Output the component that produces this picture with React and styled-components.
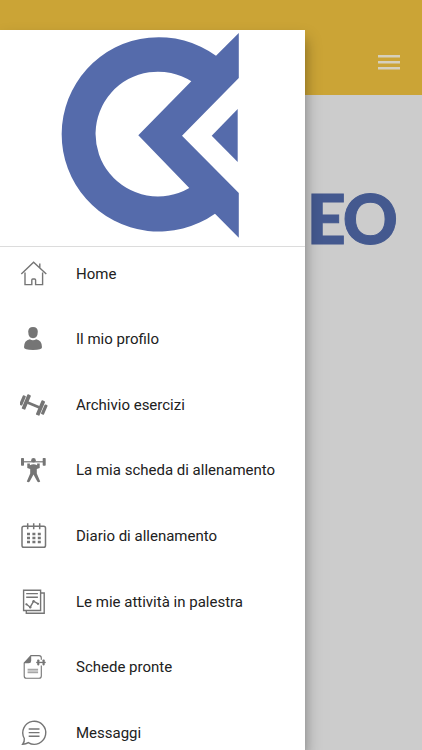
import styled, { createGlobalStyle } from "styled-components";

const GlobalStyle = createGlobalStyle`
  * {
    box-sizing: border-box;
  }
  body {
    margin: 0;
    overflow: hidden;
    font-family: Roboto, sans-serif;
  }
`;

const Screen = styled.div`
  position: relative;
  width: 100%;
  height: 100vh;
  overflow: hidden;
  background: #cccccc;
`;

const TopBar = styled.header`
  display: flex;
  justify-content: flex-end;
  height: 95px;
  padding: 55px 22px 0 0;
  background: #cba436;
`;

const MenuButton = styled.button`
  display: flex;
  flex-direction: column;
  gap: 4px;
  width: 22px;
  height: 15px;
  padding: 0;
  border: none;
  background: none;
`;

const MenuLine = styled.span`
  height: 2px;
  background: #d6d0bc;
  box-shadow: 0 0.5px 0.5px #d6d0bc;
`;

const Brand = styled.h1`
  margin: 0;
  padding: 81px 26px 0 0;
  font-family: Lato, sans-serif;
  font-size: 68px;
  font-weight: 900;
  line-height: 83px;
  letter-spacing: -2px;
  text-align: right;
  color: #44598f;
  -webkit-text-stroke: 1px #44598f;
`;

/* slides over the page, leaves the status bar visible */
const Drawer = styled.aside`
  position: absolute;
  top: 29.5px;
  bottom: 0;
  left: 0;
  width: 304.5px;
  background: white;
  box-shadow: 0 10px 10px -4px rgba(0, 0, 0, 0.26),
    2px 8px 14px 0 rgba(0, 0, 0, 0.26);
`;

const DrawerHeader = styled.div`
  height: 217.5px;
  border-bottom: 1.5px solid #dcdcdc;
`;

const Logo = styled.svg`
  display: block;
  width: 304px;
  height: 216px;
  fill: #556bab;
`;

const Menu = styled.nav`
  display: flex;
  flex-direction: column;
  gap: 13px;
  padding-top: 0.4px;
`;

const MenuItem = styled.a`
  display: flex;
  align-items: center;
  flex-shrink: 0;
  height: 52.6px;
  padding-left: 20px;
  column-gap: 28px;
  font-size: 15px;
  color: #212121;
  white-space: nowrap;
`;

const Icon = styled.svg`
  flex-shrink: 0;
  width: 28px;
  height: 28px;
  fill: none;
  stroke: #757575;
  stroke-width: 1.4;
`;

const Solid = styled.g`
  fill: #757575;
  stroke: none;
`;

const HomeIcon = () => (
  <Icon viewBox="0 0 28 28">
    <path d="M1.3 14 13.6 2.2 26.3 14M5 12.5V24.6h6.8V20q0-1 1-1h1.8q1 0 1 1v4.6h7V12.5M19.8 7.5V3.6" />
  </Icon>
);

const ProfileIcon = () => (
  <Icon viewBox="0 0 28 28">
    <Solid>
      <path d="M8.2 6.8Q8.2 2 13 2t4.8 4.8Q17.6 13.2 13 13.2T8.2 6.8Z" />
      <path d="M4 22.3q0-6.8 5.8-8 3.2 2 6.4 0 5.8 1.2 5.8 8 0 2.7-9 2.7t-9-2.7Z" />
    </Solid>
  </Icon>
);

const DumbbellIcon = () => (
  <Icon viewBox="0 0 28 28">
    <Solid transform="rotate(23 13.5 14)">
      <rect x="0" y="8.8" width="3.2" height="10.4" rx="0.8" />
      <rect x="3.8" y="6.2" width="3.8" height="15.6" rx="0.8" />
      <rect x="7" y="12.7" width="13" height="2.6" />
      <rect x="19.2" y="6.2" width="3.8" height="15.6" rx="0.8" />
      <rect x="23.6" y="8.8" width="3.2" height="10.4" rx="0.8" />
    </Solid>
  </Icon>
);

const LifterIcon = () => (
  <Icon viewBox="0 0 28 28">
    <Solid>
      <rect x="1" y="2" width="3" height="7.8" rx="0.7" />
      <rect x="22.7" y="2" width="3" height="7.8" rx="0.7" />
      <rect x="3" y="5.2" width="21" height="1.2" />
      <circle cx="13.5" cy="4.2" r="2.3" />
      <path d="M7.3 7.6h2.6v1.6q3.6-1.8 7.2 0V7.6h2.6v4.3l-2.9 1.2v4.4l3.4 8q-1.6 1.4-2.9 0l-3.8-7-3.8 7q-1.3 1.4-2.9 0l3.4-8v-4.4l-2.9-1.2Z" />
    </Solid>
  </Icon>
);

const CalendarIcon = () => (
  <Icon viewBox="0 0 28 28">
    <rect x="2" y="4.2" width="23.5" height="21" rx="1.8" strokeWidth="1.5" />
    <path d="M7.7 1.2v6M13.7 1.2v6M19.7 1.2v6" strokeWidth="1.5" />
    <path
      d="M7 12h13.8M7 16h13.8M7 20h13.8"
      strokeWidth="2.5"
      strokeDasharray="3 2.4"
    />
  </Icon>
);

const ReportIcon = () => (
  <Icon viewBox="0 0 28 28">
    <path d="M3.6 2.2h17v20.3h-17ZM6.3 22.5v2.7h17.9V5h-3.6M6.2 5.6h11.7M6.2 9.2h11.7" />
    <path d="m6.2 16 4 3.2 3.4-6 4.5 2.7" />
    <Solid>
      <circle cx="6.4" cy="16.3" r="1.1" />
      <circle cx="10.2" cy="19.2" r="1.2" />
      <circle cx="13.6" cy="13.3" r="1.2" />
      <circle cx="18" cy="15.8" r="1.1" />
    </Solid>
  </Icon>
);

const SheetIcon = () => (
  <Icon viewBox="0 0 28 28">
    <path
      d="M11 2.6h8q2.3 0 2.3 2.3v18q0 2.3-2.3 2.3H6.4q-2.2 0-2.2-2.3V10Z"
      strokeWidth="1.1"
    />
    <path d="M7.6 16.3h10.5M7.6 18h10.5M7.6 19.7h10.5" strokeWidth="0.8" />
    <rect x="16.3" y="6.8" width="9.7" height="5.7" fill="white" stroke="none" />
    <Solid>
      <path d="m3.8 10.3 7.4-8v5.5q0 2.5-2.4 2.5Z" />
      <rect x="17.2" y="6.4" width="2.2" height="6" rx="0.8" />
      <rect x="22.5" y="6.4" width="2.2" height="6" rx="0.8" />
      <rect x="16.2" y="8.8" width="9.5" height="1.3" />
    </Solid>
  </Icon>
);

const MessageIcon = () => (
  <Icon viewBox="0 0 28 28">
    <path d="M4.3 19.5A11.5 11.5 0 1 1 8.3 23.6Q6 25.2 2.7 25.2 4.7 22.7 4.3 19.5Z" />
    <path d="M8.7 10h10.8M8.7 13.6h10.8M8.7 17.2h10.8" />
  </Icon>
);

const items = [
  { label: "Home", icon: HomeIcon },
  { label: "Il mio profilo", icon: ProfileIcon },
  { label: "Archivio esercizi", icon: DumbbellIcon },
  { label: "La mia scheda di allenamento", icon: LifterIcon },
  { label: "Diario di allenamento", icon: CalendarIcon },
  { label: "Le mie attività in palestra", icon: ReportIcon },
  { label: "Schede pronte", icon: SheetIcon },
  { label: "Messaggi", icon: MessageIcon },
];

const App = () => {
  return (
    <Screen>
      <GlobalStyle />
      <TopBar>
        <MenuButton aria-label="Menu">
          <MenuLine />
          <MenuLine />
          <MenuLine />
        </MenuButton>
      </TopBar>
      <Brand>EO</Brand>
      <Drawer>
        <DrawerHeader>
          <Logo viewBox="0 30 304 216">
            <path d="M216 55.7A97.2 97.2 0 1 0 215 213.7L238.8 237.7V193L182 135.7 238.8 78V33ZM191.3 81.3 138.3 135.3 189.3 188A62.4 62.4 0 1 1 191.3 81.3Z" />
            <path d="M237.7 109v53l-26-26.3Z" />
          </Logo>
        </DrawerHeader>
        <Menu>
          {items.map(({ label, icon: ItemIcon }) => (
            <MenuItem key={label}>
              <ItemIcon />
              {label}
            </MenuItem>
          ))}
        </Menu>
      </Drawer>
    </Screen>
  );
};

export default App;
